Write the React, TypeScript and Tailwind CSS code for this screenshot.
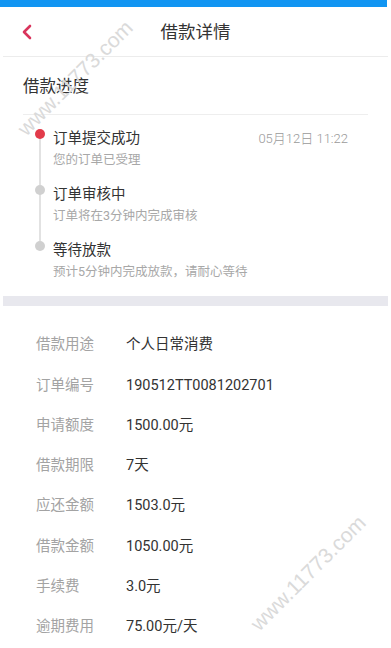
import { ReactNode } from "react";

const font = { fontFamily: 'Roboto, "Noto Sans CJK SC", sans-serif' };

function Step({
  title,
  desc,
  active,
  time,
  last,
}: {
  title: string;
  desc: string;
  active?: boolean;
  time?: string;
  last?: boolean;
}) {
  return (
    <div className={last ? "flex h-[42px] pl-[35px]" : "flex h-[56px] pl-[35px]"}>
      <span
        className={
          active
            ? "mt-[1px] w-[10px] h-[10px] rounded-full bg-[#e23b4a] relative z-10"
            : "mt-[1px] w-[10px] h-[10px] rounded-full bg-[#d0d0d0] relative z-10"
        }
      />
      <div className="flex-1 pl-[8px]">
        <div className="flex items-center justify-between h-[22px]">
          <span className="text-[14.5px] text-[#333]">{title}</span>
          {time && <span className="text-[13px] font-light text-[#9a9a9a] pr-[43px]">{time}</span>}
        </div>
        <div className="h-[20px] flex items-center text-[12.5px] text-[#a8a8a8]">{desc}</div>
      </div>
    </div>
  );
}

function Row({ label, children }: { label: string; children: ReactNode }) {
  return (
    <div className="flex items-center h-[40.3px] pl-[36px]">
      <span className="w-[90px] text-[14.5px] text-[#a3a3a3]">{label}</span>
      <span className="text-[14.5px] text-[#333]">{children}</span>
    </div>
  );
}

export default function App() {
  return (
    <div className="relative w-[391px] h-[648px] overflow-hidden bg-white" style={font}>
      {/* status bar (cropped) */}
      <div className="h-[7px] bg-[#1195f2] mr-[4px]" />

      {/* header */}
      <div className="h-[50px] flex items-center relative border-b border-[#ececec] mx-[3px]">
        <svg className="absolute left-[18px]" width="12" height="16" viewBox="0 0 12 16">
          <polyline points="9,2 3,8 9,14" fill="none" stroke="#d9345c" strokeWidth="2.6" strokeLinecap="round" strokeLinejoin="round" />
        </svg>
        <div className="flex-1 text-center text-[17.5px] text-[#333] pt-[1px]">借款详情</div>
      </div>

      {/* progress */}
      <div className="px-[23px]">
        <div className="h-[58px] pt-[4px] flex items-center border-b border-[#eeeeee] text-[16.5px] text-[#333]">借款进度</div>
      </div>
      <div className="relative pt-[13px] pb-[14px]">
        <div className="absolute left-[39px] top-[18px] h-[114px] w-[2px] bg-[#e2e2e2]" />
        <Step active title="订单提交成功" desc="您的订单已受理" time="05月12日 11:22" />
        <Step title="订单审核中" desc="订单将在3分钟内完成审核" />
        <Step last title="等待放款" desc="预计5分钟内完成放款，请耐心等待" />
      </div>

      <div className="h-[10px] bg-[#e8e8ee] mx-[3px]" />

      {/* details */}
      <div className="pt-[19px]">
        <Row label="借款用途">个人日常消费</Row>
        <Row label="订单编号">190512TT0081202701</Row>
        <Row label="申请额度">1500.00元</Row>
        <Row label="借款期限">7天</Row>
        <Row label="应还金额">1503.0元</Row>
        <Row label="借款金额">1050.00元</Row>
        <Row label="手续费">3.0元</Row>
        <Row label="逾期费用">75.00元/天</Row>
      </div>

      {/* watermarks */}
      <div className="absolute left-[75px] top-[78px] -translate-x-1/2 -translate-y-1/2 -rotate-45 text-[21px] text-[#dadada] whitespace-nowrap pointer-events-none" style={{ fontFamily: '"Liberation Sans", sans-serif' }}>
        www.11773.com
      </div>
      <div className="absolute left-[308px] top-[573px] -translate-x-1/2 -translate-y-1/2 -rotate-45 text-[21px] text-[#dadada] whitespace-nowrap pointer-events-none" style={{ fontFamily: '"Liberation Sans", sans-serif' }}>
        www.11773.com
      </div>
    </div>
  );
}
